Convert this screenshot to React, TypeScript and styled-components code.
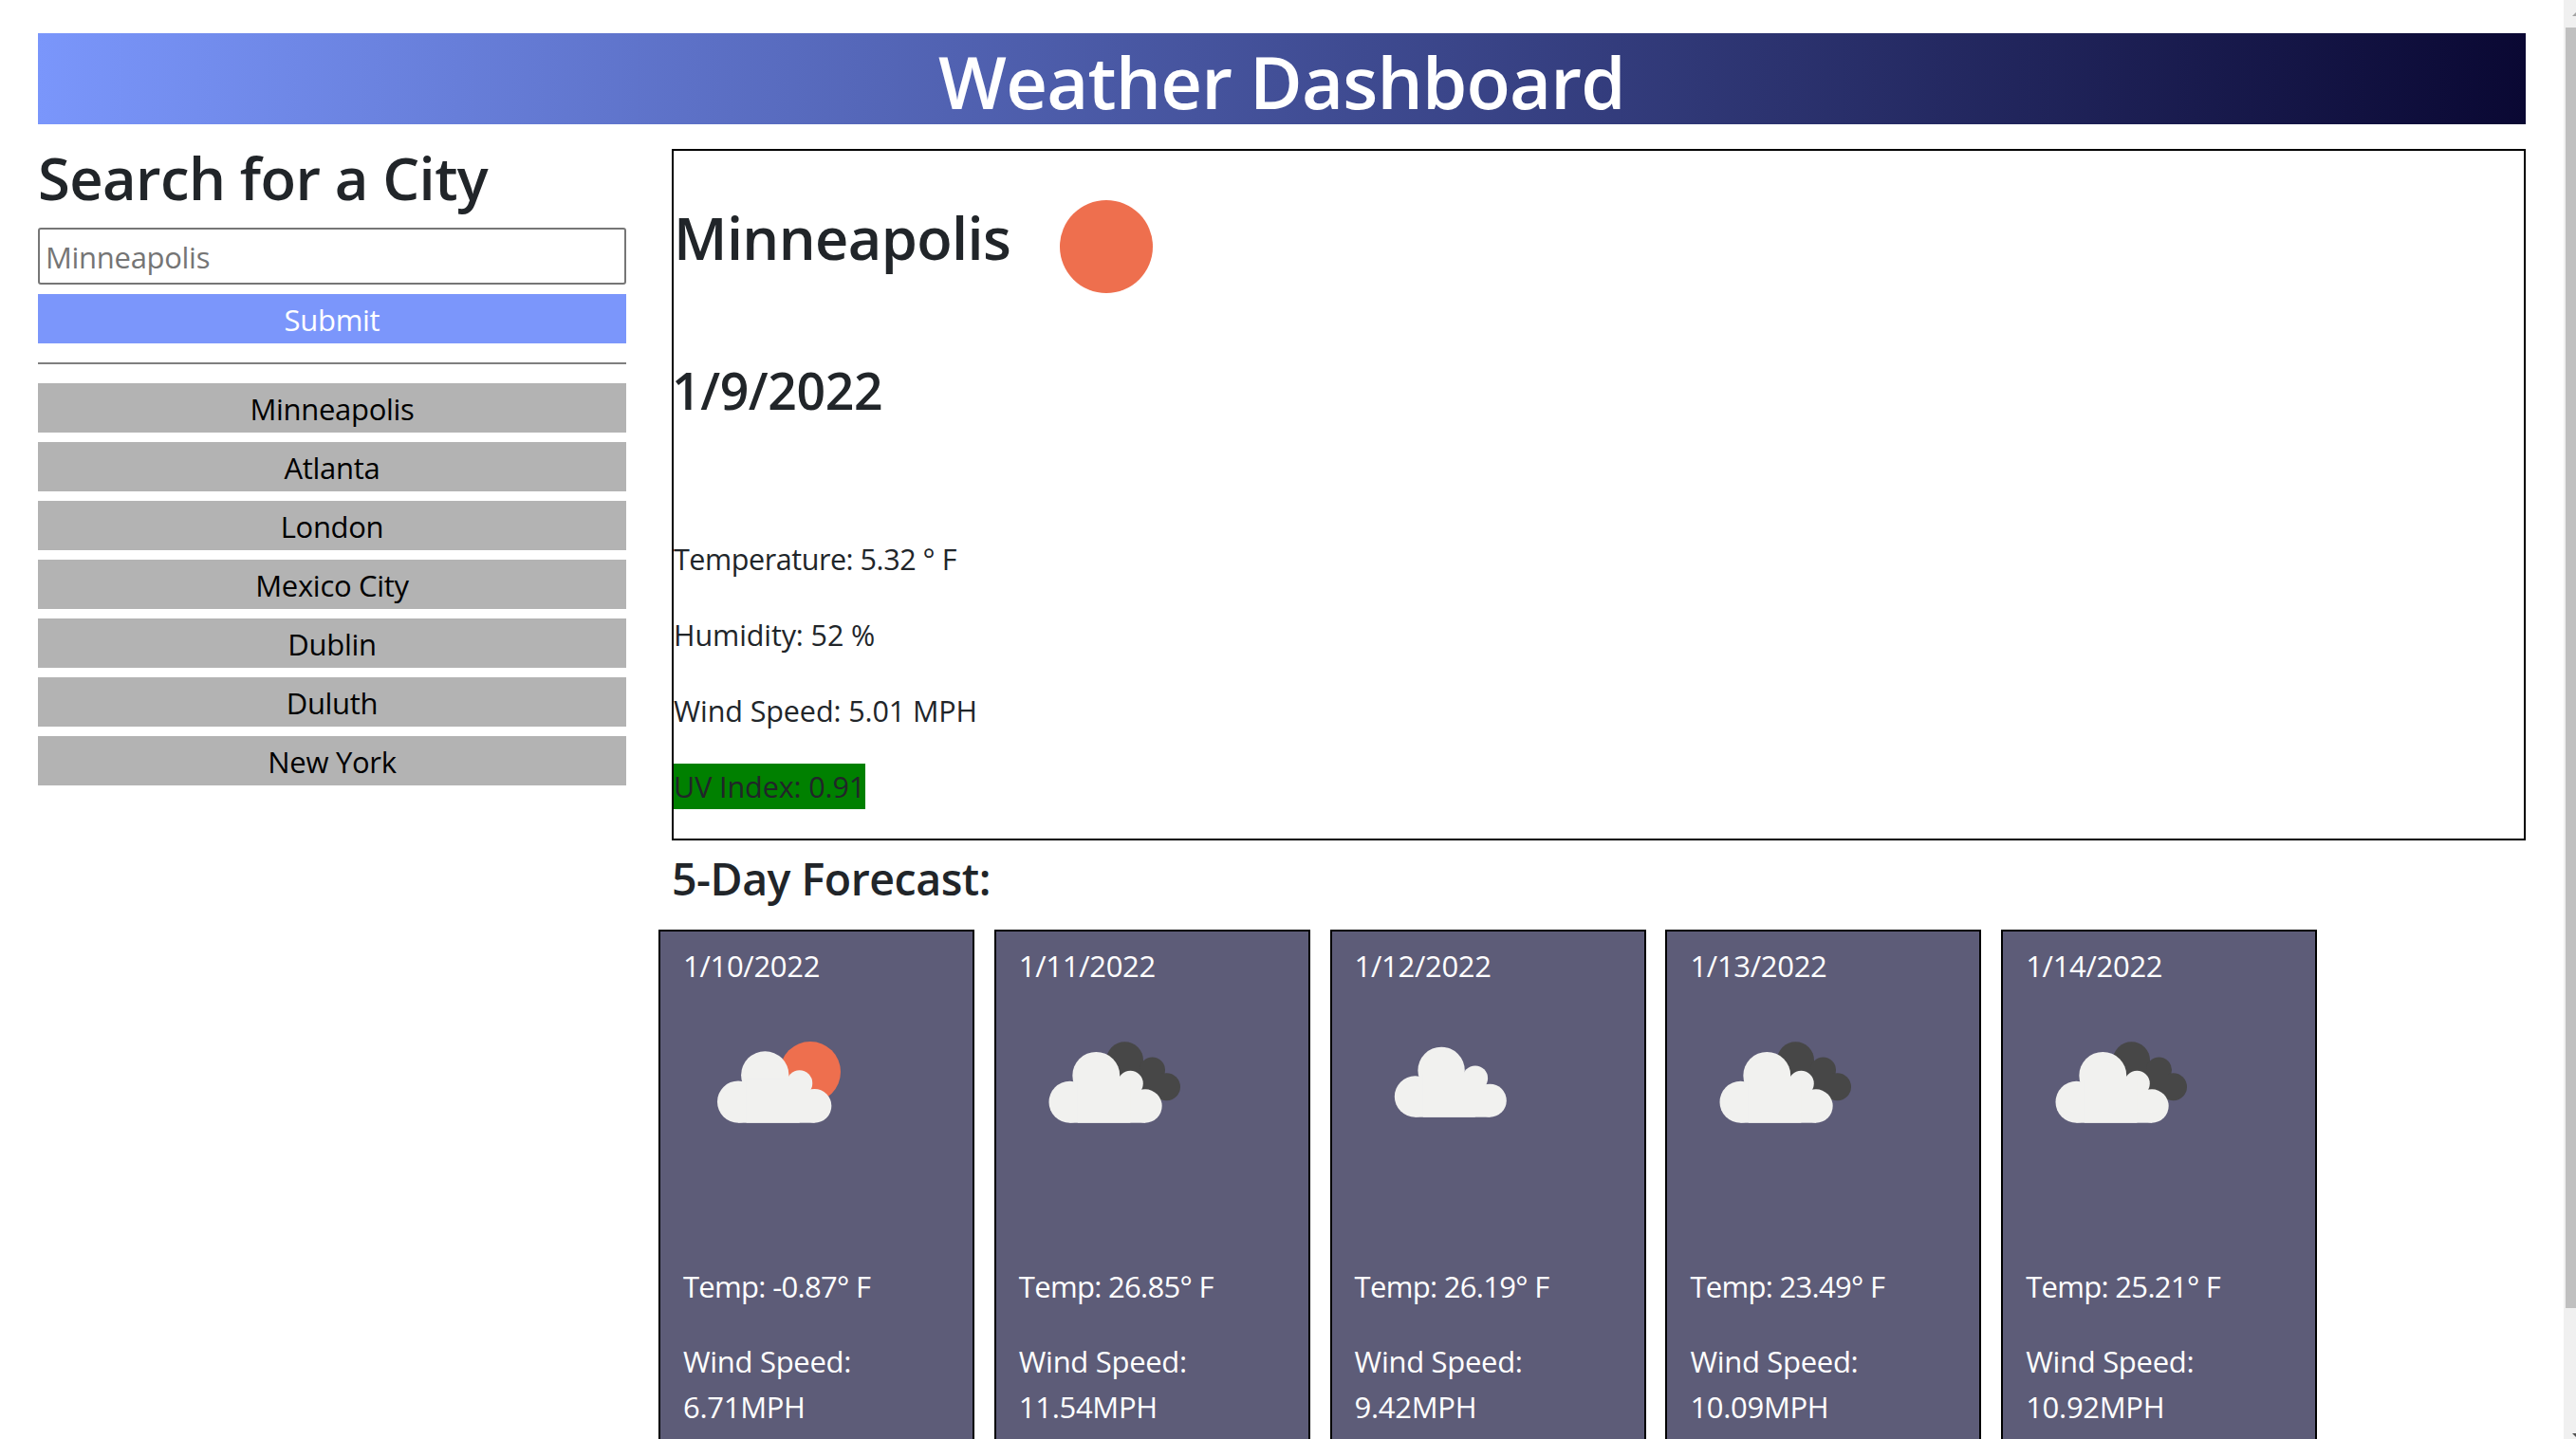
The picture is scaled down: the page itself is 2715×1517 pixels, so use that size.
import React from 'react'
import styled, { createGlobalStyle } from 'styled-components'

const GlobalStyle = createGlobalStyle`
  body {
    margin: 0;
    background: #fff;
    color: #212529;
    font-family: "Open Sans", "Noto Sans", sans-serif;
    font-size: 30.5px;
    line-height: 48px;
    letter-spacing: -0.3px;
  }
  * {
    box-sizing: border-box;
  }
`

const Page = styled.div`
  padding: 35px 53px 20px 40px;
`

const ScrollTrack = styled.div`
  position: fixed;
  top: 0;
  right: 0;
  bottom: 0;
  display: flex;
  flex-direction: column;
  justify-content: space-between;
  width: 13px;
  padding: 13px 0 2px;
  background: #f0f0f0;
`

const ScrollThumb = styled.div`
  position: absolute;
  top: 29px;
  right: 0;
  width: 11px;
  height: 1350px;
  background: #c0c0c0;
`

const ScrollArrow = styled.svg`
  display: block;
  width: 4px;
  height: 4px;
  margin-left: 9px;
`

const Banner = styled.header`
  height: 96px;
  background: linear-gradient(90deg, #7a96fb, #0a0833);
  color: #fff;
  text-align: center;
`

const BannerTitle = styled.h1`
  margin: 0;
  font-size: 76px;
  font-weight: 600;
  line-height: 101px;
  letter-spacing: -0.8px;
`

const Layout = styled.div`
  display: grid;
  grid-template-columns: 620px 1954px;
  column-gap: 48px;
  margin-top: 26px;
`

const Sidebar = styled.aside`
  display: flex;
  flex-direction: column;
`

const SideTitle = styled.h3`
  margin: 0 0 23px;
  font-size: 61.5px;
  font-weight: 600;
  line-height: 60px;
  letter-spacing: -0.6px;
  white-space: nowrap;
`

const CityInput = styled.input`
  height: 60px;
  margin-bottom: 10px;
  padding: 2px 6px 0;
  border: 2px solid #767676;
  border-radius: 3px;
  font: inherit;
  font-size: 31px;
  letter-spacing: inherit;
  &::placeholder {
    color: #757575;
  }
`

const Button = styled.button<{ $primary?: boolean }>`
  height: 52px;
  padding: 2px 0 0;
  border: 0;
  background: ${(p) => (p.$primary ? '#7b96fb' : '#b3b3b3')};
  color: ${(p) => (p.$primary ? '#fff' : '#000')};
  font: inherit;
  font-size: 31px;
  letter-spacing: inherit;
  line-height: 50px;
  text-align: center;
`

const Rule = styled.hr`
  width: 100%;
  height: 2px;
  margin: 20px 0;
  border: 0;
  background: #7f7f7f;
`

const CityList = styled.div`
  display: flex;
  flex-direction: column;
  gap: 10px;
`

const Content = styled.main`
  min-width: 0;
`

const Current = styled.section`
  height: 729px;
  border: 2px solid #000;
`

const CityRow = styled.div`
  display: flex;
  height: 200px;
  margin-top: 1px;
`

const CityName = styled.h2`
  margin: 52px 1px 0 0;
  font-size: 61.3px;
  font-weight: 600;
  line-height: 77px;
  letter-spacing: -0.6px;
`

const SunIcon = styled.svg`
  flex: none;
  width: 200px;
  height: 200px;
`

const CurrentDate = styled.h3`
  margin: 18px 0 120px -2px;
  font-size: 53.5px;
  font-weight: 600;
  line-height: 67px;
  letter-spacing: -0.4px;
`

const Stat = styled.p<{ $tight?: boolean }>`
  margin: 0 0 32px;
  letter-spacing: ${(p) => (p.$tight ? '-0.45px' : '-0.1px')};
  &:last-child {
    margin-bottom: 0;
  }
`

const UvBadge = styled.span`
  display: inline-block;
  background: #008000;
`

const ForecastTitle = styled.h4`
  margin: 11px 0 25px;
  font-size: 46.5px;
  font-weight: 600;
  line-height: 58px;
  letter-spacing: -0.5px;
`

const Cards = styled.div`
  display: flex;
  gap: 20.8px;
  margin-left: -14px;
`

const Card = styled.article`
  flex: none;
  width: 333px;
  height: 640px;
  padding: 12px 24px;
  border: 2px solid #000;
  background: #5d5c78;
  color: #fff;
  font-size: 31px;
`

const CardLine = styled.p`
  margin: 0;
`

const CardTemp = styled(CardLine)`
  margin-bottom: 31px;
  letter-spacing: -0.7px;
`

const WeatherIcon = styled.svg`
  display: block;
  width: 200px;
  height: 200px;
  margin-bottom: 90px;
`

type CloudProps = { x: number; y: number; fill: string; scale?: number }

// flat-bottomed cloud, origin at its bottom left corner
const Cloud = ({ x, y, fill, scale = 1 }: CloudProps) => (
  <g transform={`translate(${x} ${y}) scale(${scale})`} fill={fill}>
    <circle cx="21.7" cy="-21.7" r="21.7" />
    <circle cx="49.3" cy="-49.3" r="24.7" />
    <circle cx="85" cy="-41" r="13.3" />
    <circle cx="100.5" cy="-17.5" r="17.5" />
    <rect x="21.7" y="-34" width="78.8" height="34" />
    <rect x="30" y="-45" width="55" height="45" />
  </g>
)

const DarkCloud = () => (
  <g fill="#474747">
    <circle cx="111.5" cy="75.7" r="19.5" />
    <circle cx="140.5" cy="86" r="13.5" />
    <circle cx="155.5" cy="103.7" r="14.5" />
    <rect x="112" y="85" width="38" height="33" />
  </g>
)

const icons = {
  sun: (
    <>
      <circle cx="134" cy="88" r="32" fill="#ee6f4e" />
      <Cloud x={36} y={141.7} fill="#f1f1ef" scale={1.02} />
    </>
  ),
  overcast: (
    <>
      <DarkCloud />
      <Cloud x={31.5} y={141.7} fill="#f1f1ef" scale={1.01} />
    </>
  ),
  cloud: <Cloud x={41.8} y={135.7} fill="#f1f1ef" />,
}

const forecast: { date: string; temp: string; wind: string; icon: keyof typeof icons }[] = [
  { date: '1/10/2022', temp: '-0.87', wind: '6.71', icon: 'sun' },
  { date: '1/11/2022', temp: '26.85', wind: '11.54', icon: 'overcast' },
  { date: '1/12/2022', temp: '26.19', wind: '9.42', icon: 'cloud' },
  { date: '1/13/2022', temp: '23.49', wind: '10.09', icon: 'overcast' },
  { date: '1/14/2022', temp: '25.21', wind: '10.92', icon: 'overcast' },
]

const cities = ['Minneapolis', 'Atlanta', 'London', 'Mexico City', 'Dublin', 'Duluth', 'New York']

export default function App() {
  return (
    <Page>
      <GlobalStyle />
      <ScrollTrack>
        <ScrollArrow viewBox="0 0 4 4">
          <path d="M0 4 4 0V4Z" fill="#a3a3a3" />
        </ScrollArrow>
        <ScrollThumb />
        <ScrollArrow viewBox="0 0 4 4">
          <path d="M0 0H4V4Z" fill="#505050" />
        </ScrollArrow>
      </ScrollTrack>
      <Banner>
        <BannerTitle>Weather Dashboard</BannerTitle>
      </Banner>
      <Layout>
        <Sidebar>
          <SideTitle>Search for a City</SideTitle>
          <CityInput placeholder="Minneapolis" />
          <Button $primary>Submit</Button>
          <Rule />
          <CityList>
            {cities.map((city) => (
              <Button key={city}>{city}</Button>
            ))}
          </CityList>
        </Sidebar>
        <Content>
          <Current>
            <CityRow>
              <CityName>Minneapolis</CityName>
              <SunIcon viewBox="0 0 200 200">
                <circle cx="100" cy="100" r="49" fill="#ee6f4e" />
              </SunIcon>
            </CityRow>
            <CurrentDate>1/9/2022</CurrentDate>
            <Stat $tight>Temperature: 5.32 ° F</Stat>
            <Stat>Humidity: 52 %</Stat>
            <Stat>Wind Speed: 5.01 MPH</Stat>
            <Stat>
              <UvBadge>UV Index: 0.91</UvBadge>
            </Stat>
          </Current>
          <ForecastTitle>5-Day Forecast:</ForecastTitle>
          <Cards>
            {forecast.map((day) => (
              <Card key={day.date}>
                <CardLine>{day.date}</CardLine>
                <WeatherIcon viewBox="0 0 200 200">{icons[day.icon]}</WeatherIcon>
                <CardTemp>Temp: {day.temp}° F</CardTemp>
                <CardLine>Wind Speed:</CardLine>
                <CardLine>{day.wind}MPH</CardLine>
              </Card>
            ))}
          </Cards>
        </Content>
      </Layout>
    </Page>
  )
}
